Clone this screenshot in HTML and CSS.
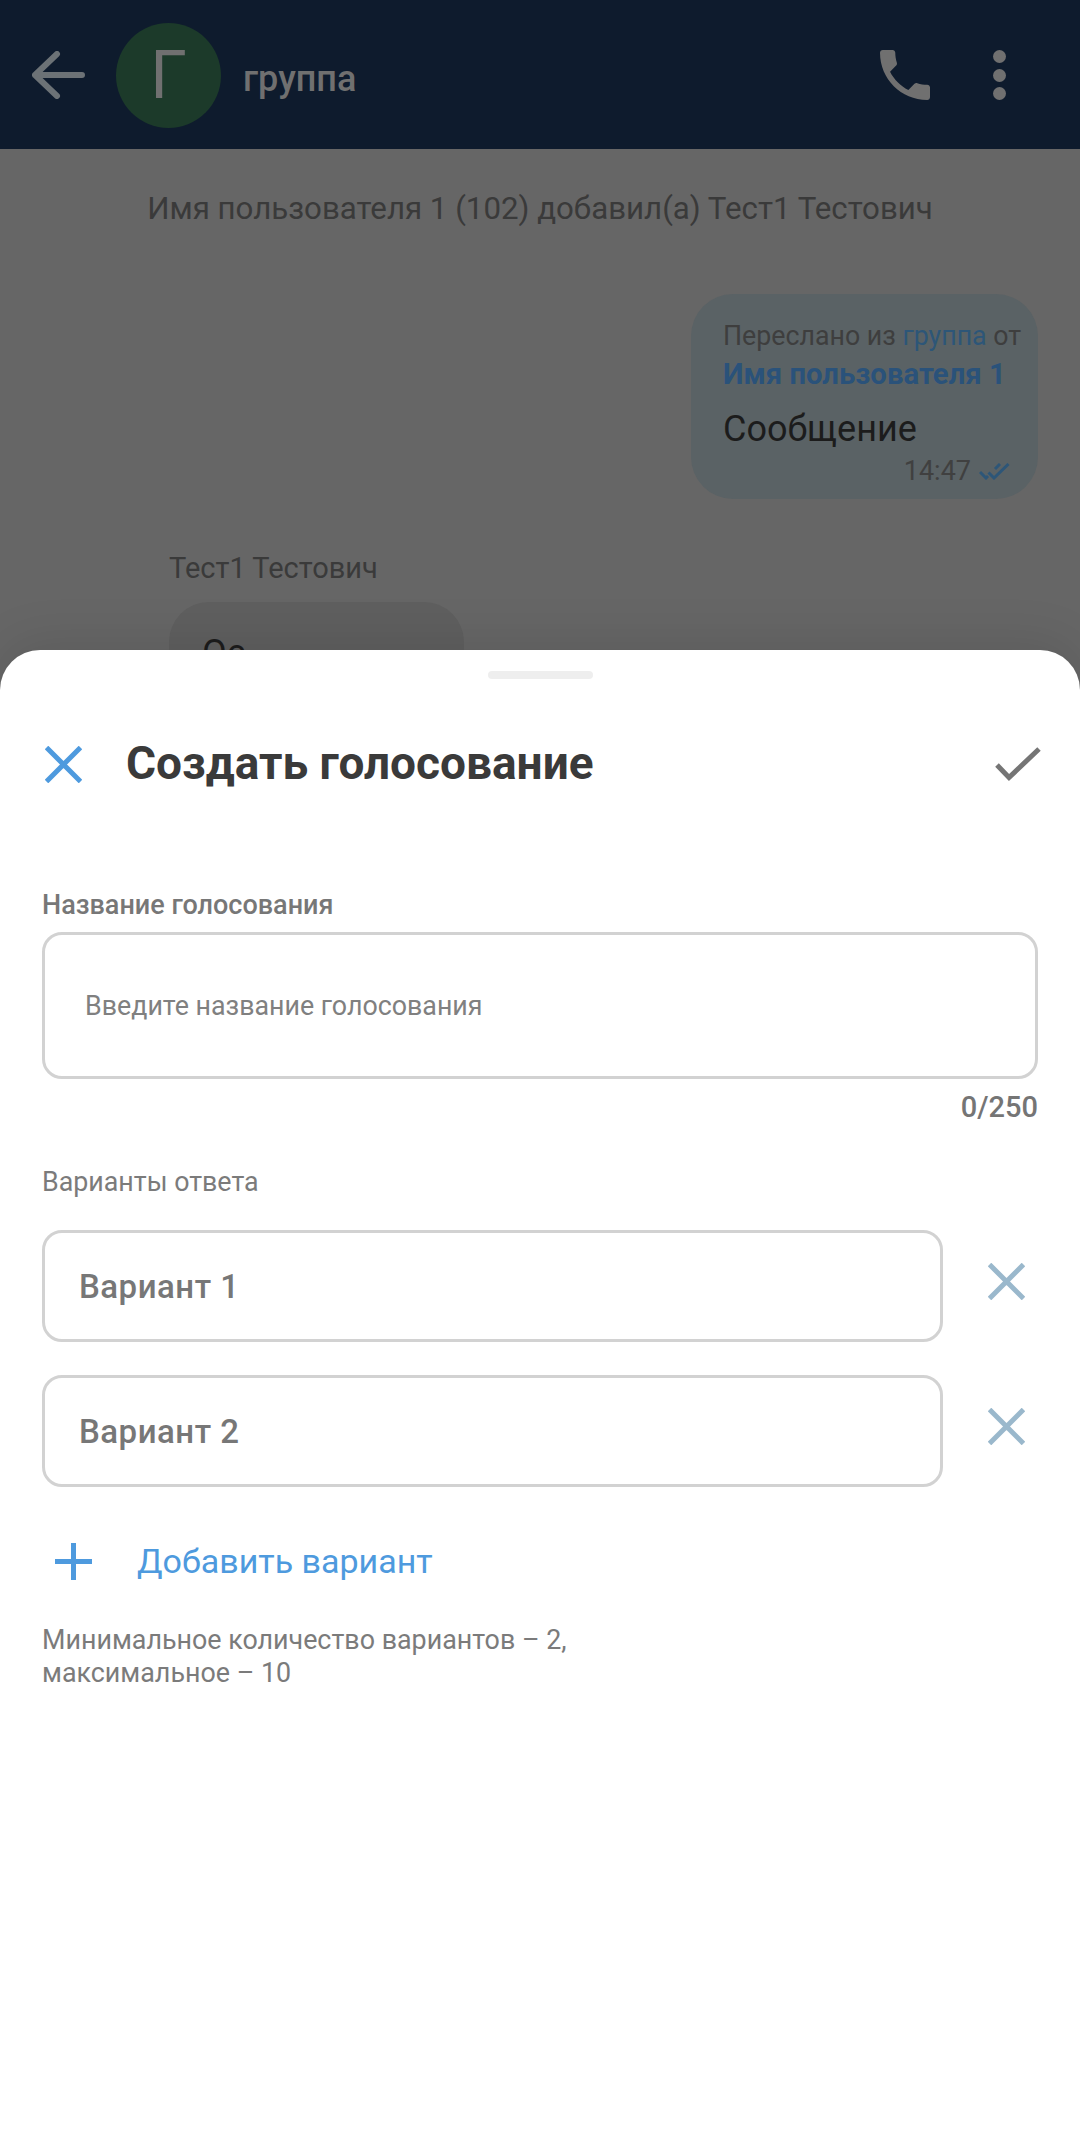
FILE: index.html
```html
<!DOCTYPE html>
<html lang="ru">
<head>
    <meta charset="UTF-8">
    <meta name="viewport" content="width=device-width, initial-scale=1.0">
    <title>Создать голосование</title>
    <link rel="stylesheet" href="styles.css">
</head>
<body>
    <div class="page">
        <div class="topbar">
            <svg class="back" width="54" height="48" viewBox="0 0 54 48"><path d="M25 3 L3 24 L25 45 M3 24 H50" fill="none" stroke="#6c7276" stroke-width="6" stroke-linecap="round" stroke-linejoin="round"/></svg>
            <div class="avatar">Г</div>
            <div class="chat-name">группа</div>
            <svg class="phone" width="50" height="50" viewBox="3 3 18 18"><path fill="#707070" d="M6.62 10.79c1.44 2.83 3.76 5.14 6.59 6.59l2.2-2.2c.27-.27.67-.36 1.02-.24 1.12.37 2.33.57 3.57.57.55 0 1 .45 1 1V20c0 .55-.45 1-1 1-9.39 0-17-7.61-17-17 0-.55.45-1 1-1h3.5c.55 0 1 .45 1 1 0 1.25.2 2.45.57 3.57.11.35.03.74-.25 1.02l-2.2 2.2z"/></svg>
            <div class="dots"><span></span><span></span><span></span></div>
        </div>

        <div class="chat">
            <div class="sys-msg">Имя пользователя 1 (102) добавил(а) Тест1 Тестович</div>
            <div class="bubble-out">
                <div class="fwd">Переслано из <span class="fwd-link">группа</span> от</div>
                <div class="fwd-user">Имя пользователя 1</div>
                <div class="msg-text">Сообщение</div>
                <div class="msg-meta">
                    <span>14:47</span>
                    <svg width="31" height="17" viewBox="0 0 31 17"><path d="M1 9 L7 15 L9 13 M16 6 L21 1 M9.5 9.5 L15 15 L29.5 1" fill="none" stroke="#2d5678" stroke-width="3"/></svg>
                </div>
            </div>
            <div class="sender">Тест1 Тестович</div>
            <div class="bubble-in">Ос</div>
        </div>

        <div class="sheet">
            <div class="handle"></div>
            <div class="sheet-head">
                <svg class="close" width="37" height="37" viewBox="0 0 37 37"><path d="M1.5 1.5 L35.5 35.5 M35.5 1.5 L1.5 35.5" stroke="#4e9ade" stroke-width="5"/></svg>
                <div class="sheet-title">Создать голосование</div>
                <svg class="check" width="46" height="35" viewBox="0 0 46 35"><path d="M2 18 L14 30.5 L44 2" fill="none" stroke="#757575" stroke-width="5"/></svg>
            </div>

            <div class="field-label">Название голосования</div>
            <div class="name-input">Введите название голосования</div>
            <div class="counter">0/250</div>

            <div class="options-label">Варианты ответа</div>
            <div class="options">
                <div class="option">
                    <div class="option-box">Вариант 1</div>
                    <svg class="option-del" width="37" height="37" viewBox="0 0 37 37"><path d="M1.5 1.5 L35.5 35.5 M35.5 1.5 L1.5 35.5" stroke="#9ab8cc" stroke-width="5"/></svg>
                </div>
                <div class="option">
                    <div class="option-box">Вариант 2</div>
                    <svg class="option-del" width="37" height="37" viewBox="0 0 37 37"><path d="M1.5 1.5 L35.5 35.5 M35.5 1.5 L1.5 35.5" stroke="#9ab8cc" stroke-width="5"/></svg>
                </div>
            </div>

            <div class="add-option">
                <svg width="37" height="37" viewBox="0 0 37 37"><path d="M18.5 0 V37 M0 18.5 H37" stroke="#4e9ade" stroke-width="5"/></svg>
                <span>Добавить вариант</span>
            </div>
            <div class="hint">Минимальное количество вариантов – 2,<br>максимальное – 10</div>
        </div>
    </div>
</body>
</html>
```

FILE: styles.css
```css
*{
    margin: 0;
    padding: 0;
    box-sizing: border-box;
}
body{
    font-family: Roboto, "Noto Sans", sans-serif;
    background: #ffffff;
}
.page{
    width: 1080px;
    height: 2144px;
    overflow: hidden;
    display: flex;
    flex-direction: column;
    background: #666666;
}

/* top bar */
.topbar{
    height: 149px;
    flex: none;
    display: flex;
    align-items: center;
    padding: 1px 0 0 32px;
    background: #0e1b2d;
}
.avatar{
    width: 105px;
    height: 105px;
    margin-left: 30px;
    border-radius: 50%;
    background: #1c3a2a;
    color: #707070;
    font-size: 66px;
    line-height: 105px;
    text-align: center;
}
.chat-name{
    flex: 1;
    margin-left: 22px;
    padding-top: 8px;
    font-size: 36px;
    font-weight: 500;
    color: #707070;
}
.phone{
    margin-right: 63px;
}
.dots{
    display: flex;
    flex-direction: column;
    gap: 5.5px;
    margin-right: 74px;
}
.dots span{
    width: 13px;
    height: 13px;
    border-radius: 50%;
    background: #707070;
}

/* chat behind the sheet */
.chat{
    height: 501px;
    flex: none;
    overflow: hidden;
    padding: 42px 42px 0;
}
.sys-msg{
    font-size: 31.25px;
    line-height: 36px;
    text-align: center;
    color: #3a3a3a;
}
.bubble-out{
    width: 347px;
    height: 205px;
    margin: 67px 0 0 auto;
    padding: 26px 0 0 32px;
    border-radius: 42px;
    background: #5a6265;
}
.fwd{
    font-size: 26.75px;
    line-height: 32px;
    color: #3e3e3e;
}
.fwd-link{
    color: #2d5678;
}
.fwd-user{
    margin-top: 6px;
    font-size: 29.3px;
    line-height: 32px;
    font-weight: 700;
    color: #2a527a;
}
.msg-text{
    margin-top: 18px;
    font-size: 36px;
    line-height: 42px;
    color: #1c1c1c;
}
.msg-meta{
    display: flex;
    align-items: center;
    justify-content: flex-end;
    gap: 8px;
    margin-top: 5px;
    padding-right: 28px;
    font-size: 27px;
    line-height: 32px;
    color: #404040;
}
.sender{
    margin: 52px 0 0 127px;
    font-size: 29px;
    line-height: 34px;
    color: #3a3a3a;
}
.bubble-in{
    width: 295px;
    height: 120px;
    margin: 17px 0 0 127px;
    padding: 30px 0 0 33px;
    border-radius: 40px;
    background: #5f5f5f;
    font-size: 36px;
    line-height: 42px;
    color: #1c1c1c;
}

/* bottom sheet */
.sheet{
    flex: 1;
    padding: 21px 42px 0;
    border-radius: 40px 40px 0 0;
    background: #ffffff;
    box-shadow: 0 -8px 50px rgba(0, 0, 0, 0.1);
}
.handle{
    width: 105px;
    height: 8px;
    margin: 0 auto;
    border-radius: 4px;
    background: #eeeeee;
}
.sheet-head{
    display: flex;
    align-items: center;
    height: 60px;
    margin-top: 55px;
}
.close{
    margin-left: 3px;
}
.sheet-title{
    flex: 1;
    margin-left: 44px;
    padding-bottom: 2px;
    font-size: 46px;
    font-weight: 700;
    color: #3a3a3a;
}
.check{
    margin-right: -3px;
}
.field-label{
    margin-top: 95px;
    font-size: 27px;
    line-height: 32px;
    font-weight: 500;
    color: #777777;
}
.name-input{
    height: 147px;
    margin-top: 11px;
    padding-left: 40px;
    border: 3px solid #d2d2d2;
    border-radius: 20px;
    font-size: 26.8px;
    line-height: 143px;
    color: #808080;
}
.counter{
    margin-top: 12px;
    font-size: 29px;
    line-height: 32px;
    font-weight: 500;
    text-align: right;
    color: #757575;
}
.options-label{
    margin-top: 43px;
    font-size: 26.8px;
    line-height: 32px;
    color: #7b7b7b;
}
.options{
    display: flex;
    flex-direction: column;
    gap: 33px;
    margin-top: 32px;
}
.option{
    display: flex;
    align-items: flex-start;
    gap: 45px;
}
.option-box{
    width: 901px;
    height: 112px;
    padding-left: 34px;
    border: 3px solid #d2d2d2;
    border-radius: 20px;
    font-size: 33px;
    font-weight: 500;
    line-height: 108px;
    letter-spacing: 0.5px;
    color: #777777;
}
.option-del{
    margin-top: 33px;
}
.add-option{
    display: flex;
    align-items: center;
    gap: 45px;
    height: 60px;
    margin-top: 44px;
    padding-left: 13px;
    font-size: 34px;
    color: #4e9ade;
}
.hint{
    margin-top: 33px;
    font-size: 26.85px;
    line-height: 33px;
    color: #7b7b7b;
}
```
